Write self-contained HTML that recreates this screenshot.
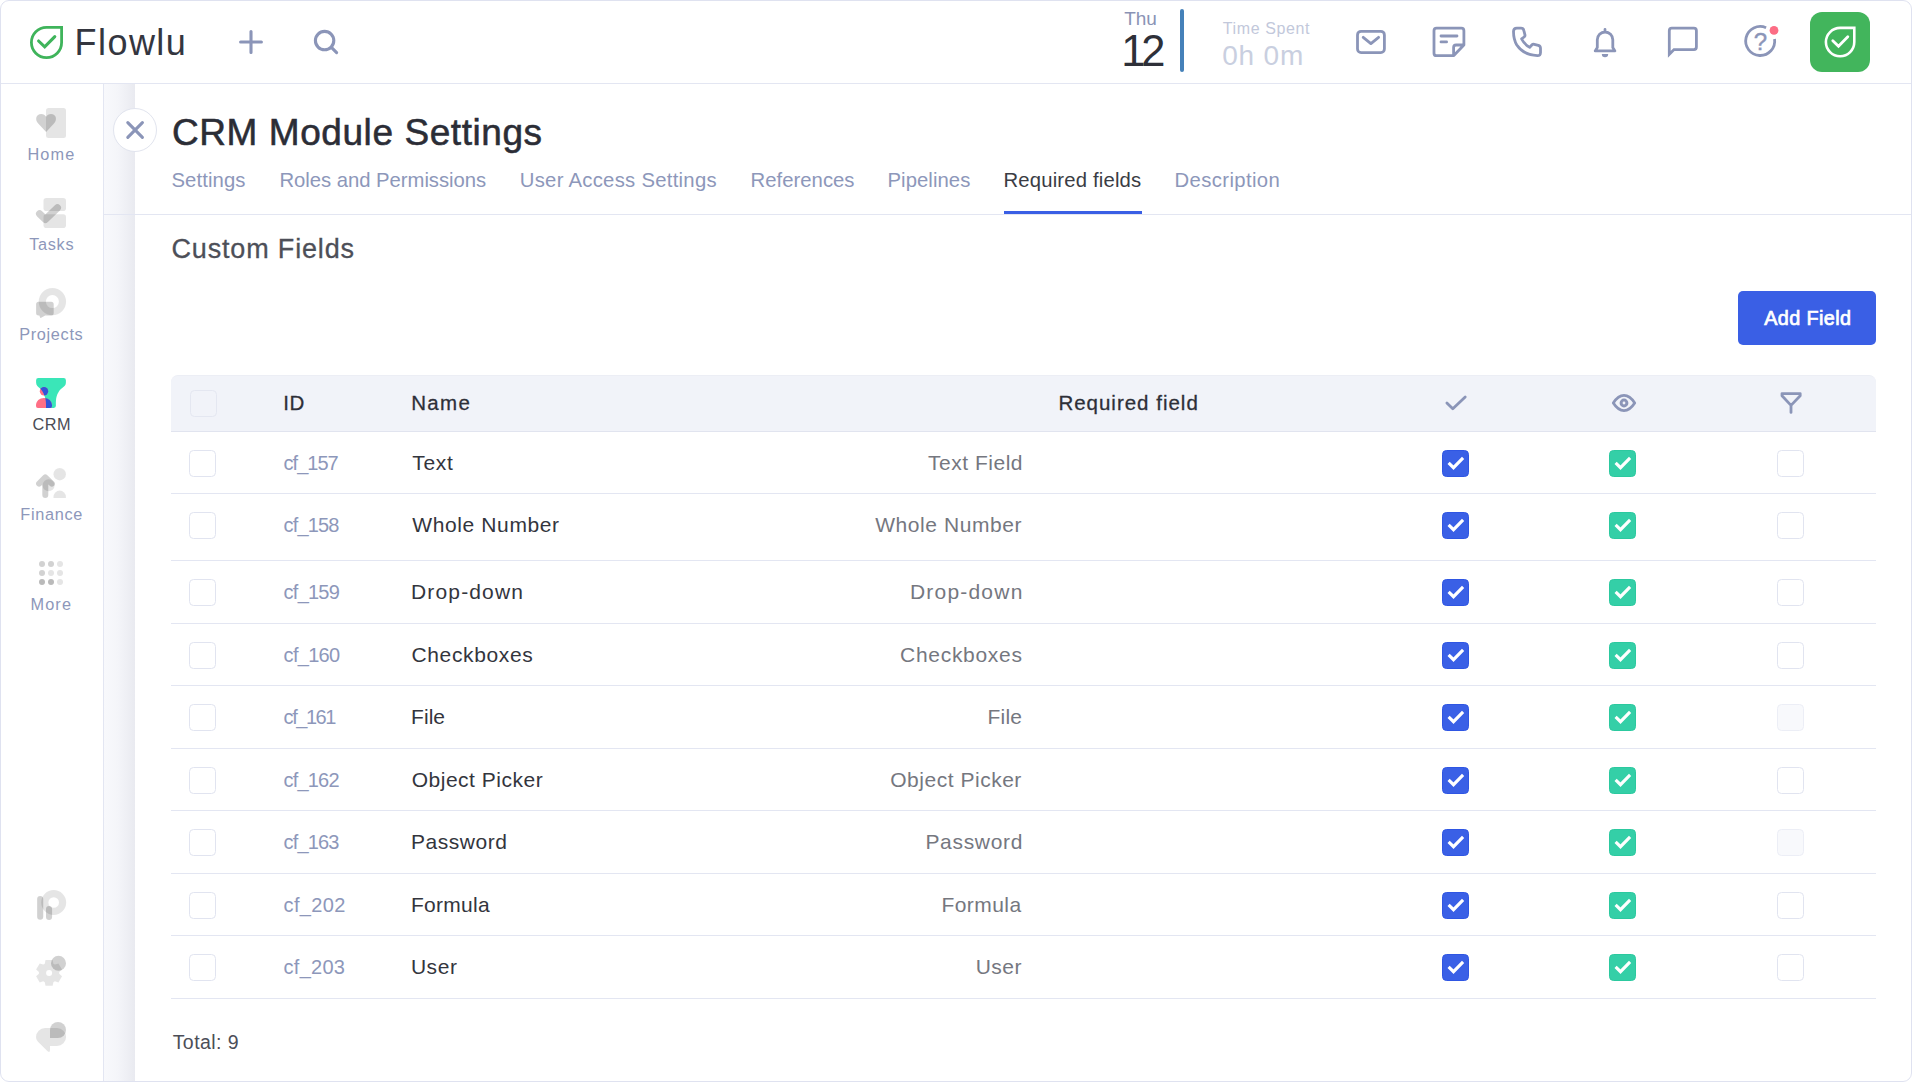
<!DOCTYPE html>
<html lang="en">
<head>
<meta charset="utf-8">
<title>CRM Module Settings</title>
<style>
*{box-sizing:border-box;margin:0;padding:0}
html,body{width:1912px;height:1082px;background:#fff;overflow:hidden}
body{font-family:"Liberation Sans",sans-serif;position:relative}
#frame{position:absolute;left:0;top:0;width:1912px;height:1082px;border:1px solid #dfe2f0;border-radius:9px;background:#fff;overflow:hidden}
#wrap{position:absolute;left:-1px;top:-1px;width:1912px;height:1082px}
.t{position:absolute;white-space:nowrap;display:block}
.abs{position:absolute}
#hdrline{left:0;top:83px;width:1912px;height:1px;background:#e3e6f2}
#sbline{left:103px;top:84px;width:1px;height:998px;background:#e3e6f2}
#strip{left:104px;top:84px;width:31px;height:998px;background:linear-gradient(90deg,#f8f9fc 0%,#f4f5f9 45%,#e9eaf0 100%)}
#tabline{left:104px;top:214px;width:1808px;height:1px;background:#e3e6f2}
#tabul{left:1004px;top:211px;width:138px;height:3px;background:#3a5fe5}
#closeb{left:113px;top:108px;width:44px;height:44px;border-radius:50%;background:#fff;border:1px solid #e1e4ee}
#vbar{left:1180px;top:9px;width:4px;height:63px;border-radius:2px;background:#4581b9}
#avatar{left:1810px;top:12px;width:60px;height:60px;border-radius:12px;background:#42b55c}
#addbtn{left:1738px;top:291px;width:138px;height:54px;border-radius:5px;background:#3a5fe5}
#thead{left:171px;top:375px;width:1705px;height:57px;background:#f1f3f9;border-radius:7px 7px 0 0;border-bottom:1px solid #e1e4ef;border-top:1px solid #eceef5}
.hl{position:absolute;left:171px;width:1705px;height:1px;background:#e3e6f2}
.cb{position:absolute;width:27px;height:27px;border-radius:4.5px;border:1px solid #e1e4f0;background:#fff}
.cb.blue{background:#3a60e6;border-color:#2f56e3}
.cb.green{background:#34cfa7;border-color:#2cc99f}
.cb.dis{background:#f8f9fc;border-color:#eceef6}
.cb.hd{background:#f1f3f9;border-color:#e4e7f1}
.cb svg{position:absolute;left:-1px;top:-1px;width:27px;height:27px}
.cb svg path{fill:none;stroke:#fff;stroke-width:3.1;stroke-linecap:butt;stroke-linejoin:miter}
svg.ic{position:absolute;overflow:visible}
</style>
</head>
<body>
<div id="frame"><div id="wrap">
<div class="abs" id="hdrline"></div>
<div class="abs" id="sbline"></div>
<div class="abs" id="strip"></div>
<div class="abs" id="tabline"></div>
<div class="abs" id="tabul"></div>
<div class="abs" id="closeb"></div>
<div class="abs" id="vbar"></div>
<div class="abs" id="avatar"></div>
<div class="abs" id="addbtn"></div>
<div class="abs" id="thead"></div>
<div class="cb hd" style="left:190px;top:390px"></div>
<svg class="ic" width="1912" height="1082" viewBox="0 0 1912 1082" style="left:0;top:0">
<g fill="none" stroke="#3fb45b">
<path d="M46.5 27.4 H61.6 V42.5 A15.1 15.1 0 1 1 46.5 27.4 Z" stroke-width="2.8" stroke-linejoin="miter"/>
<path d="M38.6 41 L44.7 46.9 L54.8 36.7" stroke-width="3.1" stroke-linecap="round" stroke-linejoin="miter"/>
</g>
<g fill="none" stroke="#8b95b8" stroke-width="3.1" stroke-linecap="round">
<path d="M240.6 42 H261.4 M251 31.6 V52.4"/>
<circle cx="324.6" cy="40.6" r="9.2"/><path d="M331.4 47.4 L336.6 52.6"/>
</g>
<path d="M127.8 122.7 L142.4 137.3 M142.4 122.7 L127.8 137.3" fill="none" stroke="#8b95b8" stroke-width="3.1" stroke-linecap="round"/>
<g fill="none" stroke="#8b95b8" stroke-width="2.8" stroke-linecap="round" stroke-linejoin="round">
<rect x="1357.5" y="31.3" width="26.9" height="21.3" rx="3.6"/>
<path d="M1363.2 37.3 L1370.9 43.6 L1378.6 37.3"/>
<path d="M1463.9 45 V30.7 a2.5 2.5 0 0 0 -2.5 -2.5 H1436.5 a2.5 2.5 0 0 0 -2.5 2.5 V53.2 a2.5 2.5 0 0 0 2.5 2.5 H1453.6 L1463.9 45 M1453.6 55.7 V47.5 a2.5 2.5 0 0 1 2.5 -2.5 H1463.9"/>
<path d="M1441 36 H1457 M1441 41.9 H1446.6"/>
<path d="M1513.5 31.5 Q1513.5 28.2 1516.8 28.2 H1521 Q1523.3 28.2 1523.8 30.4 L1524.9 34.6 Q1525.3 36.1 1524.1 37 L1521.6 38.9 Q1524.5 44.5 1529.7 47.4 L1531.8 45 Q1532.8 43.9 1534.3 44.3 L1538.3 45.4 Q1540.5 46 1540.5 48.3 V52.6 Q1540.5 55.7 1537.4 55.6 Q1523.5 55 1516.8 45 Q1513.5 39.5 1513.5 31.5 Z"/>
<path d="M1597.3 47.6 V39.75 A7.75 7.75 0 0 1 1612.8 39.75 V47.6 L1614.9 50.9 H1595.2 Z M1605 29.4 V31.5"/>
<path d="M1669.3 54.3 V30.7 a2.5 2.5 0 0 1 2.5 -2.5 H1693.9 a2.5 2.5 0 0 1 2.5 2.5 V47.1 a2.5 2.5 0 0 1 -2.5 2.5 H1674 Z" stroke-linejoin="miter"/>
<path d="M1774.56 38.98 A14.5 14.5 0 1 1 1766.10 27.75" stroke-linecap="butt"/>
</g>
<path d="M1601.8 54 H1608.2 A3.2 3.2 0 0 1 1601.8 54 Z" fill="#8b95b8"/>
<circle cx="1774" cy="30.4" r="4.4" fill="#fc6d85"/>
<text x="1760.4" y="50" text-anchor="middle" font-family="Liberation Sans, sans-serif" font-weight="400" font-size="24" stroke="#8b95b8" stroke-width="0.4" fill="#8b95b8">?</text>
<g fill="none" stroke="#fff">
<path d="M1840.1 27.9 H1854.3 V42.1 A14.2 14.2 0 1 1 1840.1 27.9 Z" stroke-width="2.6"/>
<path d="M1832.8 40.7 L1838.5 46.2 L1847.8 36.8" stroke-width="2.8" stroke-linecap="round"/>
</g>
<g fill="none" stroke="#8b95b8" stroke-width="2.8" stroke-linecap="round" stroke-linejoin="round">
<path d="M1446.9 402.9 L1452.8 408.8 L1465.2 397"/>
<path d="M1613.3 403 C1616.5 398 1620 395.4 1624 395.4 S1631.5 398 1634.7 403 C1631.5 408 1628 410.6 1624 410.6 S1616.5 408 1613.3 403 Z"/>
<circle cx="1624" cy="403" r="2.9" stroke-width="3"/>
<path d="M1782 393.6 H1800.2 V395.8 L1791 405.4 L1782 395.8 Z M1791 405.4 V412.4"/>
</g>
<rect x="46" y="108" width="20" height="30" rx="2.5" fill="rgba(0,0,0,0.10)"/>
<path d="M46.1 132 L38.2 123.6 C34.6 119.8 36 114 41.2 114 C43.5 114 45.3 115.2 46.1 116.7 C46.9 115.2 48.7 114 51 114 C56.2 114 57.6 119.8 54 123.6 Z" fill="rgba(0,0,0,0.18)"/>
<rect x="43.5" y="198" width="22.5" height="13" rx="2.8" fill="rgba(0,0,0,0.10)"/>
<rect x="43.5" y="214.2" width="22.5" height="13.8" rx="2.8" fill="rgba(0,0,0,0.10)"/>
<path d="M39.6 213.8 L45.4 219.4 L57.4 207.8" fill="none" stroke="rgba(0,0,0,0.18)" stroke-width="7.2" stroke-linecap="round" stroke-linejoin="round"/>
<circle cx="52.4" cy="301.6" r="10.1" fill="none" stroke="rgba(0,0,0,0.10)" stroke-width="7.2"/>
<path d="M38.6 301.7 H51.2 a2.5 2.5 0 0 1 2.5 2.5 V313 a2.5 2.5 0 0 1 -2.5 2.5 H45.2 L41.2 317.8 Q40.3 318.3 40 317.3 L39.4 315.5 H38.6 a2.5 2.5 0 0 1 -2.5 -2.5 V304.2 a2.5 2.5 0 0 1 2.5 -2.5 Z" fill="rgba(0,0,0,0.18)"/>
<defs><clipPath id="fclip"><path d="M38.3 378 H63.7 a2.2 2.2 0 0 1 2.2 2.2 V382.5 C65.9 385 64.5 386.3 62.8 387.4 C59.5 389.6 56.5 394 56 400 C55.8 402.5 55.9 404 55.9 405.8 a2.1 2.1 0 0 1 -2.1 2.1 H46 C46.2 403 45.8 399 44.6 396.2 C43.5 393 42 390.5 40.2 388.6 C38 386.8 36.1 385.5 36.1 382.5 V380.2 a2.2 2.2 0 0 1 2.2 -2.2 Z"/></clipPath></defs>
<path d="M38.3 378 H63.7 a2.2 2.2 0 0 1 2.2 2.2 V382.5 C65.9 385 64.5 386.3 62.8 387.4 C59.5 389.6 56.5 394 56 400 C55.8 402.5 55.9 404 55.9 405.8 a2.1 2.1 0 0 1 -2.1 2.1 H46 C46.2 403 45.8 399 44.6 396.2 C43.5 393 42 390.5 40.2 388.6 C38 386.8 36.1 385.5 36.1 382.5 V380.2 a2.2 2.2 0 0 1 2.2 -2.2 Z" fill="#3ae6b8"/>
<g fill="#ff6f86"><circle cx="44" cy="391.3" r="4.2"/><path d="M36 405.5 C36 401 39.5 398 44 398 C48.5 398 52 401 52 405.5 V406 a1.9 1.9 0 0 1 -1.9 1.9 H37.9 a1.9 1.9 0 0 1 -1.9 -1.9 Z"/></g>
<g fill="#3154d8" clip-path="url(#fclip)"><circle cx="44" cy="391.3" r="4.2"/><path d="M36 405.5 C36 401 39.5 398 44 398 C48.5 398 52 401 52 405.5 V406 a1.9 1.9 0 0 1 -1.9 1.9 H37.9 a1.9 1.9 0 0 1 -1.9 -1.9 Z"/></g>
<circle cx="59.7" cy="474.2" r="6.2" fill="rgba(0,0,0,0.10)"/>
<path d="M53.5 498 V497 A6.2 6.4 0 0 1 65.9 497 V498 Z" fill="rgba(0,0,0,0.10)"/>
<circle cx="48.6" cy="485.2" r="6" fill="rgba(0,0,0,0.10)"/>
<path d="M45.3 478 V494.9 M39.1 483.6 L45.3 477.4 L51.8 483.6" fill="none" stroke="rgba(0,0,0,0.18)" stroke-width="6" stroke-linecap="round" stroke-linejoin="round"/>
<circle cx="42" cy="564" r="3" fill="#d2d2d2"/>
<circle cx="51" cy="564" r="3" fill="#d2d2d2"/>
<circle cx="60" cy="564" r="3" fill="#e5e5e5"/>
<circle cx="42" cy="573" r="3" fill="#d2d2d2"/>
<circle cx="51" cy="573" r="3" fill="#e5e5e5"/>
<circle cx="60" cy="573" r="3" fill="#e5e5e5"/>
<circle cx="42" cy="582" r="3" fill="#bababa"/>
<circle cx="51" cy="582" r="3" fill="#bababa"/>
<circle cx="60" cy="582" r="3" fill="#e5e5e5"/>
<circle cx="53.7" cy="902.5" r="8.9" fill="none" stroke="rgba(0,0,0,0.10)" stroke-width="7.2"/>
<path d="M40.2 899.1 V916.8 M49.05 909 V916.9" fill="none" stroke="rgba(0,0,0,0.18)" stroke-width="6.1" stroke-linecap="round"/>
<path d="M44.76 963.71 L45.49 960.04 L52.65 960.04 L53.38 963.71 L54.92 964.59 L58.46 963.39 L62.04 969.59 L59.23 972.06 L59.23 973.84 L62.04 976.31 L58.46 982.51 L54.92 981.31 L53.38 982.19 L52.65 985.86 L45.49 985.86 L44.76 982.19 L43.22 981.31 L39.68 982.51 L36.10 976.31 L38.91 973.84 L38.91 972.06 L36.10 969.59 L39.68 963.39 L43.22 964.59Z M52.1 973.1 a3 3 0 1 0 -6 0 a3 3 0 1 0 6 0 Z" fill="rgba(0,0,0,0.10)" fill-rule="evenodd" stroke="rgba(0,0,0,0.10)" stroke-width="0" />
<circle cx="58.5" cy="963.3" r="7.5" fill="rgba(0,0,0,0.18)"/>
<path d="M45 1028 H57.1 a9 9 0 0 1 0 18 H50 V1050 Q50 1052.6 48 1051.6 Q47.3 1051.2 46.8 1050.6 L39.5 1043.2 Q36 1040.5 36 1037 a9 9 0 0 1 9 -9 Z" fill="rgba(0,0,0,0.10)"/>
<path d="M50 1038 V1030 A8 8 0 0 1 66 1030 A8 8 0 0 1 58 1038 Z" fill="rgba(0,0,0,0.18)"/>
</svg>
<div class="hl" style="top:493px"></div>
<div class="hl" style="top:560px"></div>
<div class="hl" style="top:623px"></div>
<div class="hl" style="top:685px"></div>
<div class="hl" style="top:748px"></div>
<div class="hl" style="top:810px"></div>
<div class="hl" style="top:873px"></div>
<div class="hl" style="top:935px"></div>
<div class="hl" style="top:998px"></div>
<div class="cb" style="left:189px;top:450.0px"></div>
<div class="cb blue" style="left:1442px;top:450.0px"><svg viewBox="0 0 27 27"><path d="M6.6 12.8 L11.5 17.7 L21.1 7.9" /></svg></div>
<div class="cb green" style="left:1609px;top:450.0px"><svg viewBox="0 0 27 27"><path d="M6.6 12.8 L11.5 17.7 L21.1 7.9" /></svg></div>
<div class="cb" style="left:1777px;top:450.0px"></div>
<div class="cb" style="left:189px;top:512.0px"></div>
<div class="cb blue" style="left:1442px;top:512.0px"><svg viewBox="0 0 27 27"><path d="M6.6 12.8 L11.5 17.7 L21.1 7.9" /></svg></div>
<div class="cb green" style="left:1609px;top:512.0px"><svg viewBox="0 0 27 27"><path d="M6.6 12.8 L11.5 17.7 L21.1 7.9" /></svg></div>
<div class="cb" style="left:1777px;top:512.0px"></div>
<div class="cb" style="left:189px;top:579.0px"></div>
<div class="cb blue" style="left:1442px;top:579.0px"><svg viewBox="0 0 27 27"><path d="M6.6 12.8 L11.5 17.7 L21.1 7.9" /></svg></div>
<div class="cb green" style="left:1609px;top:579.0px"><svg viewBox="0 0 27 27"><path d="M6.6 12.8 L11.5 17.7 L21.1 7.9" /></svg></div>
<div class="cb" style="left:1777px;top:579.0px"></div>
<div class="cb" style="left:189px;top:642.0px"></div>
<div class="cb blue" style="left:1442px;top:642.0px"><svg viewBox="0 0 27 27"><path d="M6.6 12.8 L11.5 17.7 L21.1 7.9" /></svg></div>
<div class="cb green" style="left:1609px;top:642.0px"><svg viewBox="0 0 27 27"><path d="M6.6 12.8 L11.5 17.7 L21.1 7.9" /></svg></div>
<div class="cb" style="left:1777px;top:642.0px"></div>
<div class="cb" style="left:189px;top:704.0px"></div>
<div class="cb blue" style="left:1442px;top:704.0px"><svg viewBox="0 0 27 27"><path d="M6.6 12.8 L11.5 17.7 L21.1 7.9" /></svg></div>
<div class="cb green" style="left:1609px;top:704.0px"><svg viewBox="0 0 27 27"><path d="M6.6 12.8 L11.5 17.7 L21.1 7.9" /></svg></div>
<div class="cb dis" style="left:1777px;top:704.0px"></div>
<div class="cb" style="left:189px;top:767.0px"></div>
<div class="cb blue" style="left:1442px;top:767.0px"><svg viewBox="0 0 27 27"><path d="M6.6 12.8 L11.5 17.7 L21.1 7.9" /></svg></div>
<div class="cb green" style="left:1609px;top:767.0px"><svg viewBox="0 0 27 27"><path d="M6.6 12.8 L11.5 17.7 L21.1 7.9" /></svg></div>
<div class="cb" style="left:1777px;top:767.0px"></div>
<div class="cb" style="left:189px;top:829.0px"></div>
<div class="cb blue" style="left:1442px;top:829.0px"><svg viewBox="0 0 27 27"><path d="M6.6 12.8 L11.5 17.7 L21.1 7.9" /></svg></div>
<div class="cb green" style="left:1609px;top:829.0px"><svg viewBox="0 0 27 27"><path d="M6.6 12.8 L11.5 17.7 L21.1 7.9" /></svg></div>
<div class="cb dis" style="left:1777px;top:829.0px"></div>
<div class="cb" style="left:189px;top:892.0px"></div>
<div class="cb blue" style="left:1442px;top:892.0px"><svg viewBox="0 0 27 27"><path d="M6.6 12.8 L11.5 17.7 L21.1 7.9" /></svg></div>
<div class="cb green" style="left:1609px;top:892.0px"><svg viewBox="0 0 27 27"><path d="M6.6 12.8 L11.5 17.7 L21.1 7.9" /></svg></div>
<div class="cb" style="left:1777px;top:892.0px"></div>
<div class="cb" style="left:189px;top:954.0px"></div>
<div class="cb blue" style="left:1442px;top:954.0px"><svg viewBox="0 0 27 27"><path d="M6.6 12.8 L11.5 17.7 L21.1 7.9" /></svg></div>
<div class="cb green" style="left:1609px;top:954.0px"><svg viewBox="0 0 27 27"><path d="M6.6 12.8 L11.5 17.7 L21.1 7.9" /></svg></div>
<div class="cb" style="left:1777px;top:954.0px"></div>
<span class="t" id="logo" style="font-size:36px;line-height:36px;top:24.53px;color:#34363f;letter-spacing:1.435px;left:74.60px;">Flowlu</span>
<span class="t" id="thu" style="font-size:19px;line-height:19px;top:8.92px;color:#8a93b5;letter-spacing:-0.132px;left:1124.28px;">Thu</span>
<span class="t" id="d12" style="font-size:43.5px;line-height:43.5px;top:30.18px;color:#2e3039;letter-spacing:-4.186px;left:1121.34px;">12</span>
<span class="t" id="tsp" style="font-size:16px;line-height:16px;top:21.46px;color:#c2c8db;letter-spacing:0.598px;left:1222.83px;">Time Spent</span>
<span class="t" id="t0h" style="font-size:28px;line-height:28px;top:42.30px;color:#c9cfe0;letter-spacing:0.817px;left:1222.17px;">0h 0m</span>
<span class="t" id="sb_home" style="font-size:16.3px;line-height:16.3px;top:146.20px;color:#8d97ba;letter-spacing:1.169px;left:27.44px;">Home</span>
<span class="t" id="sb_tasks" style="font-size:16.3px;line-height:16.3px;top:236.20px;color:#8d97ba;letter-spacing:0.705px;left:29.17px;">Tasks</span>
<span class="t" id="sb_proj" style="font-size:16.3px;line-height:16.3px;top:326.20px;color:#8d97ba;letter-spacing:0.686px;left:19.14px;">Projects</span>
<span class="t" id="sb_crm" style="font-size:16.3px;line-height:16.3px;top:416.20px;color:#4a4c55;letter-spacing:0.482px;left:32.44px;">CRM</span>
<span class="t" id="sb_fin" style="font-size:16.3px;line-height:16.3px;top:506.20px;color:#8d97ba;letter-spacing:0.701px;left:20.27px;">Finance</span>
<span class="t" id="sb_more" style="font-size:16.3px;line-height:16.3px;top:596.20px;color:#8d97ba;letter-spacing:1.140px;left:30.44px;">More</span>
<span class="t" id="title" style="font-size:37px;line-height:37px;top:113.68px;color:#2b2d36;letter-spacing:0.570px;left:171.96px;-webkit-text-stroke:0.55px #2b2d36;">CRM Module Settings</span>
<span class="t" id="tab0" style="font-size:20.3px;line-height:20.3px;top:169.82px;color:#8d97ba;letter-spacing:0.099px;left:171.45px;">Settings</span>
<span class="t" id="tab1" style="font-size:20.3px;line-height:20.3px;top:169.82px;color:#8d97ba;letter-spacing:-0.038px;left:279.51px;">Roles and Permissions</span>
<span class="t" id="tab2" style="font-size:20.3px;line-height:20.3px;top:169.82px;color:#8d97ba;letter-spacing:0.275px;left:519.76px;">User Access Settings</span>
<span class="t" id="tab3" style="font-size:20.3px;line-height:20.3px;top:169.82px;color:#8d97ba;letter-spacing:0.032px;left:750.51px;">References</span>
<span class="t" id="tab4" style="font-size:20.3px;line-height:20.3px;top:169.82px;color:#8d97ba;letter-spacing:0.058px;left:887.51px;">Pipelines</span>
<span class="t" id="tab5" style="font-size:20.3px;line-height:20.3px;top:169.82px;color:#3a3c44;letter-spacing:0.173px;left:1003.51px;">Required fields</span>
<span class="t" id="tab6" style="font-size:20.3px;line-height:20.3px;top:169.82px;color:#8d97ba;letter-spacing:0.384px;left:1174.51px;">Description</span>
<span class="t" id="cf" style="font-size:27px;line-height:27px;top:235.64px;color:#4d4f58;letter-spacing:0.838px;left:171.45px;-webkit-text-stroke:0.3px #4d4f58;">Custom Fields</span>
<span class="t" id="addf" style="font-size:19.8px;line-height:19.8px;top:309.24px;color:#ffffff;letter-spacing:0.398px;left:1764.29px;-webkit-text-stroke:0.7px #ffffff;">Add Field</span>
<span class="t" id="h_id" style="font-size:20.5px;line-height:20.5px;top:392.65px;color:#2d2f38;letter-spacing:0.701px;left:283.13px;-webkit-text-stroke:0.28px #2d2f38;">ID</span>
<span class="t" id="h_name" style="font-size:20.5px;line-height:20.5px;top:392.65px;color:#2d2f38;letter-spacing:1.370px;left:411.16px;-webkit-text-stroke:0.28px #2d2f38;">Name</span>
<span class="t" id="h_req" style="font-size:20.5px;line-height:20.5px;top:392.65px;color:#2d2f38;letter-spacing:0.993px;left:1058.38px;-webkit-text-stroke:0.28px #2d2f38;">Required field</span>
<span class="t" id="r0_id" style="font-size:20px;line-height:20px;top:453.07px;color:#8d97ba;letter-spacing:-1.001px;left:283.61px;">cf_157</span>
<span class="t" id="r0_n" style="font-size:21px;line-height:21px;top:452.22px;color:#33353d;letter-spacing:0.680px;left:412.24px;">Text</span>
<span class="t" id="r0_t" style="font-size:21px;line-height:21px;top:452.22px;color:#75777f;letter-spacing:0.503px;left:928.11px;">Text Field</span>
<span class="t" id="r1_id" style="font-size:20px;line-height:20px;top:515.07px;color:#8d97ba;letter-spacing:-0.864px;left:283.61px;">cf_158</span>
<span class="t" id="r1_n" style="font-size:21px;line-height:21px;top:514.22px;color:#33353d;letter-spacing:0.603px;left:412.36px;">Whole Number</span>
<span class="t" id="r1_t" style="font-size:21px;line-height:21px;top:514.22px;color:#75777f;letter-spacing:0.558px;left:875.24px;">Whole Number</span>
<span class="t" id="r2_id" style="font-size:20px;line-height:20px;top:582.07px;color:#8d97ba;letter-spacing:-0.768px;left:283.61px;">cf_159</span>
<span class="t" id="r2_n" style="font-size:21px;line-height:21px;top:581.22px;color:#33353d;letter-spacing:1.152px;left:411.00px;">Drop-down</span>
<span class="t" id="r2_t" style="font-size:21px;line-height:21px;top:581.22px;color:#75777f;letter-spacing:1.212px;left:909.92px;">Drop-down</span>
<span class="t" id="r3_id" style="font-size:20px;line-height:20px;top:645.07px;color:#8d97ba;letter-spacing:-0.721px;left:283.61px;">cf_160</span>
<span class="t" id="r3_n" style="font-size:21px;line-height:21px;top:644.22px;color:#33353d;letter-spacing:0.645px;left:411.46px;">Checkboxes</span>
<span class="t" id="r3_t" style="font-size:21px;line-height:21px;top:644.22px;color:#75777f;letter-spacing:0.695px;left:900.10px;">Checkboxes</span>
<span class="t" id="r4_id" style="font-size:20px;line-height:20px;top:707.07px;color:#8d97ba;letter-spacing:-1.463px;left:283.61px;">cf_161</span>
<span class="t" id="r4_n" style="font-size:21px;line-height:21px;top:706.22px;color:#33353d;letter-spacing:0.068px;left:411.00px;">File</span>
<span class="t" id="r4_t" style="font-size:21px;line-height:21px;top:706.22px;color:#75777f;letter-spacing:0.273px;left:987.40px;">File</span>
<span class="t" id="r5_id" style="font-size:20px;line-height:20px;top:770.07px;color:#8d97ba;letter-spacing:-0.822px;left:283.61px;">cf_162</span>
<span class="t" id="r5_n" style="font-size:21px;line-height:21px;top:769.22px;color:#33353d;letter-spacing:0.522px;left:411.65px;">Object Picker</span>
<span class="t" id="r5_t" style="font-size:21px;line-height:21px;top:769.22px;color:#75777f;letter-spacing:0.520px;left:890.26px;">Object Picker</span>
<span class="t" id="r6_id" style="font-size:20px;line-height:20px;top:832.07px;color:#8d97ba;letter-spacing:-0.864px;left:283.61px;">cf_163</span>
<span class="t" id="r6_n" style="font-size:21px;line-height:21px;top:831.22px;color:#33353d;letter-spacing:0.526px;left:411.00px;">Password</span>
<span class="t" id="r6_t" style="font-size:21px;line-height:21px;top:831.22px;color:#75777f;letter-spacing:0.692px;left:925.40px;">Password</span>
<span class="t" id="r7_id" style="font-size:20px;line-height:20px;top:895.07px;color:#8d97ba;letter-spacing:0.326px;left:283.61px;">cf_202</span>
<span class="t" id="r7_n" style="font-size:21px;line-height:21px;top:894.22px;color:#33353d;letter-spacing:0.269px;left:411.00px;">Formula</span>
<span class="t" id="r7_t" style="font-size:21px;line-height:21px;top:894.22px;color:#75777f;letter-spacing:0.442px;left:941.40px;">Formula</span>
<span class="t" id="r8_id" style="font-size:20px;line-height:20px;top:957.07px;color:#8d97ba;letter-spacing:0.255px;left:283.61px;">cf_203</span>
<span class="t" id="r8_n" style="font-size:21px;line-height:21px;top:956.22px;color:#33353d;letter-spacing:0.575px;left:410.88px;">User</span>
<span class="t" id="r8_t" style="font-size:21px;line-height:21px;top:956.22px;color:#75777f;letter-spacing:0.461px;left:975.67px;">User</span>
<span class="t" id="total" style="font-size:19.5px;line-height:19.5px;top:1033.49px;color:#4c4e57;letter-spacing:0.458px;left:172.65px;">Total: 9</span>
</div></div>
</body>
</html>
